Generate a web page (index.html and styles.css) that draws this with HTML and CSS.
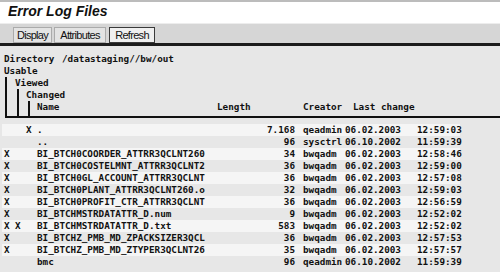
FILE: index.html
```html
<!DOCTYPE html>
<html lang="en">
<head>
    <meta charset="UTF-8">
    <title>Error Log Files</title>
    <link rel="stylesheet" href="styles.css">
</head>
<body>
    <div class="window-top"></div>
    <div class="title-bar">
        <h1>Error Log Files</h1>
    </div>
    <div class="toolbar">
        <button class="btn btn-display">Display</button>
        <button class="btn btn-attr">Attributes</button>
        <button class="btn btn-refresh">Refresh</button>
    </div>

    <div class="content">
        <div class="tree">
            <div class="dir-line">
                <span class="dir-label">Directory</span>
                <span>/datastaging//bw/out</span>
            </div>
            <div class="line">Usable</div>
            <div class="nest nest-usable">
                <div class="line">Viewed</div>
                <div class="nest nest-viewed">
                    <div class="line">Changed</div>
                    <div class="nest nest-changed">
                        <div class="head-row">
                            <span>Name</span>
                            <span>Length</span>
                            <span class="pad">Creator</span>
                            <span class="pad">Last change</span>
                        </div>
                    </div>
                </div>
            </div>
        </div>

        <div class="file-list">
            <div class="file-row"><span></span><span></span><span>X</span><span>.</span><span class="len">7.168</span><span class="pad">qeadmin</span><span>06.02.2003</span><span>12:59:03</span></div>
            <div class="file-row"><span></span><span></span><span></span><span>..</span><span class="len">96</span><span class="pad">sysctrl</span><span>06.10.2002</span><span>11:59:39</span></div>
            <div class="file-row"><span>X</span><span></span><span></span><span>BI_BTCH0COORDER_ATTRR3QCLNT260</span><span class="len">34</span><span class="pad">bwqadm</span><span>06.02.2003</span><span>12:58:46</span></div>
            <div class="file-row"><span>X</span><span></span><span></span><span>BI_BTCH0COSTELMNT_ATTRR3QCLNT2</span><span class="len">36</span><span class="pad">bwqadm</span><span>06.02.2003</span><span>12:59:00</span></div>
            <div class="file-row"><span>X</span><span></span><span></span><span>BI_BTCH0GL_ACCOUNT_ATTRR3QCLNT</span><span class="len">36</span><span class="pad">bwqadm</span><span>06.02.2003</span><span>12:57:08</span></div>
            <div class="file-row"><span>X</span><span></span><span></span><span>BI_BTCH0PLANT_ATTRR3QCLNT260.o</span><span class="len">32</span><span class="pad">bwqadm</span><span>06.02.2003</span><span>12:59:03</span></div>
            <div class="file-row"><span>X</span><span></span><span></span><span>BI_BTCH0PROFIT_CTR_ATTRR3QCLNT</span><span class="len">36</span><span class="pad">bwqadm</span><span>06.02.2003</span><span>12:56:59</span></div>
            <div class="file-row"><span>X</span><span></span><span></span><span>BI_BTCHMSTRDATATTR_D.num</span><span class="len">9</span><span class="pad">bwqadm</span><span>06.02.2003</span><span>12:52:02</span></div>
            <div class="file-row"><span>X</span><span>X</span><span></span><span>BI_BTCHMSTRDATATTR_D.txt</span><span class="len">583</span><span class="pad">bwqadm</span><span>06.02.2003</span><span>12:52:02</span></div>
            <div class="file-row"><span>X</span><span></span><span></span><span>BI_BTCHZ_PMB_MD_ZPACKSIZER3QCL</span><span class="len">36</span><span class="pad">bwqadm</span><span>06.02.2003</span><span>12:57:53</span></div>
            <div class="file-row"><span>X</span><span></span><span></span><span>BI_BTCHZ_PMB_MD_ZTYPER3QCLNT26</span><span class="len">35</span><span class="pad">bwqadm</span><span>06.02.2003</span><span>12:57:57</span></div>
            <div class="file-row"><span></span><span></span><span></span><span>bmc</span><span class="len">96</span><span class="pad">qeadmin</span><span>06.10.2002</span><span>11:59:39</span></div>
        </div>
    </div>
</body>
</html>
```

FILE: styles.css
```css
body {
    margin: 0;
    width: 500px;
    height: 272px;
    overflow: hidden;
    background: #e7e7e7;
    color: #111;
    font-family: "DejaVu Sans Mono", "Liberation Mono", monospace;
}

.window-top {
    height: 2px;
    background: #bcbcbc;
}

.title-bar {
    height: 21px;
    padding-left: 8px;
    background: #fff;
    border-bottom: 1px solid #ededed;
}

.title-bar h1 {
    margin: 0;
    font: italic bold 14px/19px "Liberation Sans", Arial, sans-serif;
    color: #111;
}

.toolbar {
    display: flex;
    gap: 2px;
    height: 22px;
    box-sizing: border-box;
    padding: 3px 0 0 13px;
    background: #d6d6d6;
    border-bottom: 3px solid #1c1c1c;
}

.btn {
    height: 16px;
    padding: 0;
    font: 11px/14px "Liberation Sans", Arial, sans-serif;
    letter-spacing: -0.7px;
    color: #111;
    background: #e3e3e3;
    border: 1px solid #ababab;
}

.btn-display { width: 39px; }
.btn-attr { width: 52px; }

.btn-refresh {
    width: 46px;
    margin-left: 1px;
    background: #efefef;
    border-color: #3a3a3a;
}

.content {
    padding-top: 7px;
    font-size: 9.3px;
    font-weight: bold;
    line-height: 12px;
}

.tree {
    padding-left: 4px;
}

.dir-line {
    display: flex;
}

.dir-label {
    width: 58px;
}

.nest {
    border-left: 2px solid #111;
}

.nest-usable {
    margin-left: 1px;
    padding-left: 8px;
    border-bottom: 2px solid #111;
}

.nest-viewed {
    margin-left: 2px;
    padding-left: 7px;
}

.nest-changed {
    margin-left: 2px;
    padding-left: 7px;
    padding-bottom: 3px;
}

.head-row {
    display: grid;
    grid-template-columns: 180px 78px 50px 72px;
}

.pad {
    padding-left: 8px;
}

.file-list {
    width: 458px;
    margin: 6px 0 0 2px;
}

.file-row {
    display: grid;
    grid-template-columns: 11px 11px 11px 180px 78px 50px 72px 1fr;
    height: 12px;
    padding-left: 2px;
    white-space: nowrap;
}

.file-row:nth-child(odd) {
    background: #f5f5f5;
}

.file-row .len {
    text-align: right;
}
```
